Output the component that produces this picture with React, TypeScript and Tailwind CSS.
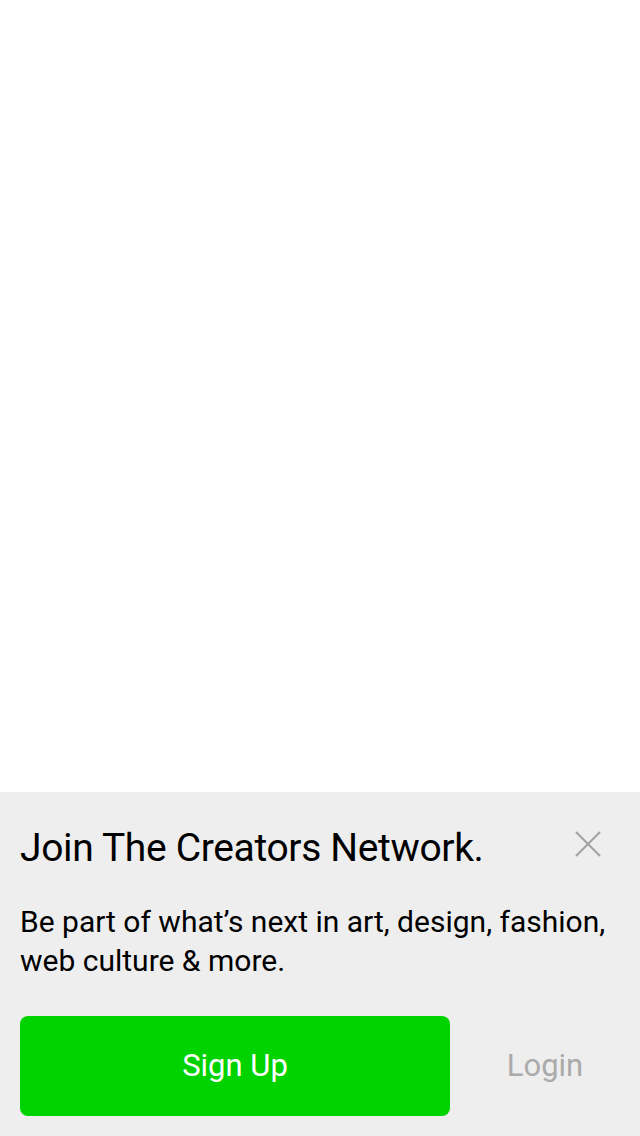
export default function App(): React.JSX.Element {
    return (
        <div className="flex h-[1136px] w-[640px] flex-col bg-white font-['Roboto','Liberation_Sans',sans-serif]">
            <div className="flex-1" />

            <section className="h-[344px] bg-[#eeeeee] pl-5 pt-[34px]">
                <div className="flex items-center justify-between pr-5">
                    <h1 className="text-[39px] leading-[44px] font-normal tracking-[-0.35px] text-black">
                        Join The Creators Network.
                    </h1>
                    <button type="button" className="mr-[19px] mb-[8px] text-[#a2a2a2]" aria-label="Close">
                        <svg width="26" height="26" viewBox="0 0 26 26" fill="none" stroke="currentColor" strokeWidth="2">
                            <path d="M1 1L25 25M25 1L1 25" />
                        </svg>
                    </button>
                </div>

                <p className="mt-[32px] pr-5 text-[30px] leading-[39px] tracking-[0px] text-black">
                    Be part of what’s next in art, design, fashion, web culture &amp; more.
                </p>

                <div className="mt-[36px] flex items-center">
                    <button
                        type="button"
                        className="h-[100px] w-[430px] rounded-[8px] bg-[#00d300] text-[31px] text-white"
                    >
                        Sign Up
                    </button>
                    <button type="button" className="flex-1 text-center text-[31px] text-[#aaaaaa]">
                        Login
                    </button>
                </div>
            </section>
        </div>
    );
}
